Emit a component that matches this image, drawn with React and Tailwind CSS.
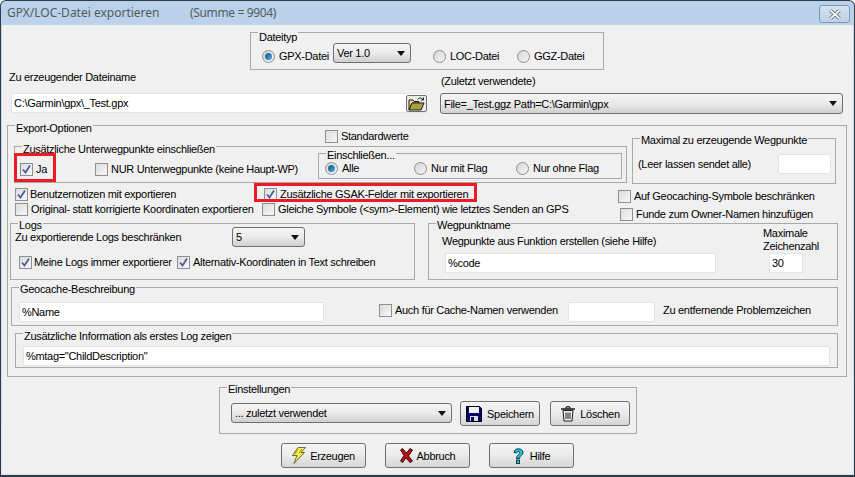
const Group = ({ title, className, titleClass = "-top-[6px]", children }) => (
    <div className={`relative border border-[#a9a9a9] ${className}`}>
        <span className={`absolute ${titleClass} left-[7px] bg-[#f0f0f0] px-px leading-[14px] whitespace-nowrap`}>{title}</span>
        {children}
    </div>
);

const Check = ({ checked, label, className = "", textClass = "ml-[3px]" }) => (
    <div className={`flex items-center h-[14px] whitespace-nowrap ${className}`}>
        <span className="w-[13px] h-[13px] shrink-0 border border-[#8e8f8f] bg-gradient-to-br from-[#dcdcdc] to-[#f8f8f8] flex items-center justify-center">
            {checked && (
                <svg width="11" height="11" viewBox="0 0 11 11">
                    <path d="M2 5.5 L4.5 8.5 L9 1.5" fill="none" stroke="#4a5f97" strokeWidth="1.8" />
                </svg>
            )}
        </span>
        <span className={textClass}>{label}</span>
    </div>
);

const Radio = ({ checked, label, className = "" }) => (
    <div className={`flex items-center h-[14px] whitespace-nowrap ${className}`}>
        <span className="w-[13px] h-[13px] shrink-0 rounded-full border border-[#8e8f8f] bg-gradient-to-br from-[#d4d4d4] to-[#f6f6f6] flex items-center justify-center">
            {checked && <span className="w-[7px] h-[7px] rounded-full bg-gradient-to-br from-[#0d4f86] to-[#4fb0e0]"></span>}
        </span>
        <span className="ml-[4px]">{label}</span>
    </div>
);

const Combo = ({ value, className = "" }) => (
    <div className={`flex items-center justify-between border border-[#707070] rounded-[3px] bg-gradient-to-b from-[#f4f4f4] via-[#ebebeb] to-[#cfcfcf] pl-[3px] pr-[5px] whitespace-nowrap ${className}`}>
        <span>{value}</span>
        <svg width="8" height="5" viewBox="0 0 8 5"><path d="M0 0H8L4 5Z" fill="#111" /></svg>
    </div>
);

const TextBox = ({ value = "", className = "" }) => (
    <input
        readOnly
        value={value}
        className={`block h-[20px] bg-white border border-[#e2e3ea] rounded-[1px] pl-[2px] outline-none ${className}`}
    />
);

const Btn = ({ icon, label, gap = "gap-[4px]", className = "" }) => (
    <div className={`flex items-center justify-center ${gap} h-[25px] border border-[#707070] rounded-[3px] bg-gradient-to-b from-[#f4f4f4] via-[#ebebeb] to-[#d5d5d5] whitespace-nowrap ${className}`}>
        {icon}
        <span>{label}</span>
    </div>
);

const FolderIcon = () => (
    <svg width="17" height="14" viewBox="0 0 17 14">
        <path d="M1 3H5L6 4.5H11V6H4L1 13Z" fill="#f4e27e" stroke="#1c1c1c" />
        <path d="M1 13L4 6H16L13 13Z" fill="#a8a23a" stroke="#1c1c1c" />
        <path d="M9.5 2.5C11 0.5 13 0.5 15 2.5M15.5 0.5V3H13" fill="none" stroke="#1c1c1c" />
    </svg>
);

const SaveIcon = () => (
    <svg width="16" height="16" viewBox="0 0 16 16">
        <path d="M0.5 0.5H13.5L15.5 2.5V15.5H0.5Z" fill="#07076a" stroke="#000" />
        <rect x="3" y="1" width="10" height="6" fill="#f2f2fa" />
        <rect x="4" y="10" width="8" height="5" fill="#dcdce8" />
        <rect x="5" y="11" width="3" height="4" fill="#07076a" />
    </svg>
);

const TrashIcon = () => (
    <svg width="16" height="17" viewBox="0 0 16 17">
        <path d="M1 4H15M6 3.5C6 1 10 1 10 3.5" fill="none" stroke="#1c1c1c" strokeWidth="1.4" />
        <path d="M3 5.5H13L12 16H4Z" fill="#f2f2f2" stroke="#1c1c1c" />
        <path d="M6 7.5V14M8 7.5V14M10 7.5V14" stroke="#1c1c1c" />
    </svg>
);

const BoltIcon = () => (
    <svg width="14" height="17" viewBox="0 0 14 17">
        <path d="M6 0.5H13.5L9 5.5H12.5L2 16.5L5 8.5H0.5Z" fill="#f4ee4a" stroke="#4a4a20" strokeWidth="0.8" />
        <path d="M5.5 2.5L3 7M10 2L7 6" stroke="#a39a10" />
    </svg>
);

const CrossIcon = () => (
    <svg width="13" height="15" viewBox="0 0 13 15">
        <path d="M2.5 0.5L6.5 5L10 0.5L12.5 2L8.5 8L12.5 13L10 14.5L6 10L2.5 14.5L0.5 13L4 7.5L0.5 2Z" fill="#b80d0d" stroke="#2c0404" strokeWidth="0.9" />
    </svg>
);

const HelpIcon = () => (
    <svg width="11" height="16" viewBox="0 0 11 16">
        <path d="M1 4.5C1 -0.5 10 -0.5 10 4.5C10 7.5 6.5 7.5 6.5 10.5H3.5C3.5 7 7 6.5 6.5 4.5C6 3 4 3 3.5 5Z" fill="#19c3d6" stroke="#0a2c3c" strokeWidth="0.9" />
        <rect x="3.5" y="12" width="3" height="3.5" fill="#19c3d6" stroke="#0a2c3c" strokeWidth="0.9" />
    </svg>
);

const App = () => {
    return (
        <div className="w-[855px] h-[477px] overflow-hidden bg-[#2f3b47] pt-px px-px pb-[2px] rounded-t-[6px] text-[11px] tracking-[-0.3px] leading-[14px] text-black font-['Liberation_Sans',sans-serif]">
            <div className="h-full px-px pb-px rounded-t-[5px] bg-gradient-to-b from-[#b9d1ea] to-[#d3e3f3]">
                <div className="flex items-center h-[24px] text-[#555a60] text-[12px] tracking-normal font-['Noto_Sans',sans-serif] relative">
                    <span className="ml-[5px] w-[183px]">GPX/LOC-Datei exportieren</span>
                    <span className="tracking-[-0.35px]">(Summe = 9904)</span>
                    <div className="absolute right-[3px] top-[4px] w-[31px] h-[18px] border border-[#8296ad] rounded-[3px] bg-gradient-to-b from-[#d4e2f0] to-[#bdd1e6] flex items-center justify-center">
                        <svg width="14" height="11" viewBox="0 0 14 11">
                            <path d="M2.5 1.5L11.5 9.5M11.5 1.5L2.5 9.5" stroke="#5a6470" strokeWidth="3.6" />
                            <path d="M2.5 1.5L11.5 9.5M11.5 1.5L2.5 9.5" stroke="#f4f6f8" strokeWidth="1.8" />
                        </svg>
                    </div>
                </div>

                <div className="h-[449px] bg-[#f0f0f0] overflow-hidden">
                    <Group title="Dateityp" titleClass="-top-[3px]" className="ml-[248px] mt-[7px] w-[354px] h-[38px] flex items-start">
                        <Radio checked label="GPX-Datei" className="ml-[11px] mt-[16px] w-[71px]" />
                        <Combo value="Ver 1.0" className="mt-[10px] w-[78px] h-[20px]" />
                        <Radio label="LOC-Datei" className="ml-[22px] mt-[16px] w-[84px]" />
                        <Radio label="GGZ-Datei" className="mt-[16px]" />
                    </Group>

                    <div className="flex h-[43px]">
                        <div className="w-[438px]">
                            <div className="pl-[7px]">Zu erzeugender Dateiname</div>
                            <div className="relative ml-[9px] mt-[9px] w-[416px]">
                                <TextBox value="C:\Garmin\gpx\_Test.gpx" className="w-full" />
                                <div className="absolute right-0 top-[2px] w-[21px] h-[17px] border border-[#707070] rounded-[2px] bg-[#ececec] flex items-center justify-center">
                                    <FolderIcon />
                                </div>
                            </div>
                        </div>
                        <div>
                            <div className="mt-[4px] pl-px">(Zuletzt verwendete)</div>
                            <Combo value="File=_Test.ggz Path=C:\Garmin\gpx" className="mt-[5px] w-[403px] h-[21px]" />
                        </div>
                    </div>

                    <Group title="Export-Optionen" titleClass="-top-[5px]" className="ml-[5px] mt-[12px] w-[840px] h-[252px]">
                        <div className="flex h-[58px]">
                            <div className="w-[617px]">
                                <Check label="Standardwerte" className="ml-[317px] mt-[3px]" />
                                <Group title="Zusätzliche Unterwegpunkte einschließen" titleClass="-top-[5px]" className="ml-[6px] mt-[3px] w-[613px] h-[37px] flex items-start">
                                    <div className="relative ml-[5px] mt-[15px] w-[75px]">
                                        <Check checked label="Ja" />
                                        <div className="absolute -left-[6px] -top-[9px] w-[42px] h-[29px] border-[3px] border-[#ed1c24]"></div>
                                    </div>
                                    <Check label="NUR Unterwegpunkte (keine Haupt-WP)" className="mt-[15px] w-[223px]" />
                                    <Group title="Einschließen..." className="mt-[6px] w-[304px] h-[26px] flex items-start">
                                        <Radio checked label="Alle" className="ml-[6px] mt-[7px] w-[89px]" />
                                        <Radio label="Nur mit Flag" className="mt-[7px] w-[102px]" />
                                        <Radio label="Nur ohne Flag" className="mt-[7px]" />
                                    </Group>
                                </Group>
                            </div>
                            <Group title="Maximal zu erzeugende Wegpunkte" className="ml-[7px] mt-[12px] w-[204px] h-[46px] flex items-start">
                                <span className="ml-[5px] mt-[18px] w-[140px]">(Leer lassen sendet alle)</span>
                                <TextBox className="mt-[15px] w-[53px]" />
                            </Group>
                        </div>

                        <div className="flex h-[39px]">
                            <div className="w-[610px]">
                                <div className="flex mt-[3px]">
                                    <Check checked label="Benutzernotizen mit exportieren" textClass="ml-[2px]" className="ml-[7px] w-[249px]" />
                                    <div className="relative">
                                        <Check checked label="Zusätzliche GSAK-Felder mit exportieren" />
                                        <div className="absolute -left-[10px] -top-[4px] w-[223px] h-[19px] border-[3px] border-[#ed1c24]"></div>
                                    </div>
                                </div>
                                <div className="flex mt-px">
                                    <Check label="Original- statt korrigierte Koordinaten exportieren" className="ml-[7px] w-[247px]" textClass="ml-[3px]" />
                                    <Check label={"Gleiche Symbole (<sym>-Element) wie letztes Senden an GPS"} />
                                </div>
                            </div>
                            <div>
                                <Check label="Auf Geocaching-Symbole beschränken" className="mt-[5px]" />
                                <Check label="Funde zum Owner-Namen hinzufügen" className="ml-[2px] mt-[4px]" />
                            </div>
                        </div>

                        <div className="flex h-[57px]">
                            <Group title="Logs" titleClass="-top-[6px]" className="ml-[2px] w-[405px] h-[57px]">
                                <div className="flex items-center ml-[4px] mt-[3px] h-[20px]">
                                    <span className="w-[217px]">Zu exportierende Logs beschränken</span>
                                    <Combo value="5" className="w-[73px] h-[20px]" />
                                </div>
                                <div className="flex ml-[8px] mt-[8px]">
                                    <Check checked label="Meine Logs immer exportieren" textClass="ml-[2px] w-[138px] overflow-hidden" className="w-[158px]" />
                                    <Check checked label="Alternativ-Koordinaten in Text schreiben" />
                                </div>
                            </Group>
                            <Group title="Wegpunktname" className="ml-[13px] w-[410px] h-[57px] flex">
                                <div className="w-[334px]">
                                    <div className="ml-[13px] mt-[10px]">Wegpunkte aus Funktion erstellen (siehe Hilfe)</div>
                                    <TextBox value="%code" className="ml-[16px] mt-[5px] w-[271px]" />
                                </div>
                                <div className="pt-[3px] leading-[13px]">
                                    <div>Maximale</div>
                                    <div>Zeichenzahl</div>
                                    <TextBox value="30" className="ml-[6px] w-[34px]" />
                                </div>
                            </Group>
                        </div>

                        <Group title="Geocache-Beschreibung" className="ml-[3px] mt-[7px] w-[827px] h-[39px] flex items-start">
                            <TextBox value="%Name" className="ml-[7px] mt-[14px] w-[305px]" />
                            <Check label="Auch für Cache-Namen verwenden" className="ml-[55px] mt-[15px] w-[189px]" />
                            <TextBox className="mt-[14px] w-[87px]" />
                            <span className="ml-[8px] mt-[15px] whitespace-nowrap">Zu entfernende Problemzeichen</span>
                        </Group>

                        <Group title="Zusätzliche Information als erstes Log zeigen" titleClass="-top-[5px]" className="ml-[7px] mt-[7px] w-[823px] h-[35px]">
                            <TextBox value={'%mtag="ChildDescription"'} className="ml-[7px] mt-[12px] w-[807px]" />
                        </Group>
                    </Group>

                    <Group title="Einstellungen" className="ml-[217px] mt-[10px] w-[418px] h-[47px] flex items-start">
                        <Combo value="... zuletzt verwendet" className="ml-[11px] mt-[15px] w-[221px] h-[20px]" />
                        <Btn icon={<SaveIcon />} label="Speichern" gap="gap-[5px]" className="ml-[8px] mt-[13px] w-[80px]" />
                        <Btn icon={<TrashIcon />} label="Löschen" className="ml-[10px] mt-[13px] w-[80px]" />
                    </Group>

                    <div className="flex ml-[279px] mt-[9px]">
                        <Btn icon={<BoltIcon />} label="Erzeugen" className="w-[85px]" />
                        <Btn icon={<CrossIcon />} label="Abbruch" className="ml-[19px] w-[85px]" />
                        <Btn icon={<HelpIcon />} label="Hilfe" gap="gap-[6px]" className="ml-[19px] w-[85px]" />
                    </div>
                </div>
            </div>
        </div>
    );
};

export default App;
